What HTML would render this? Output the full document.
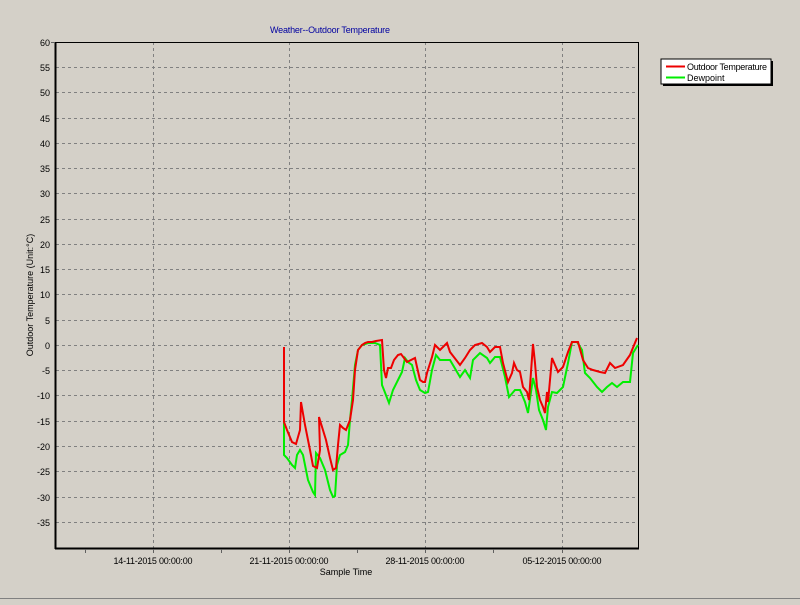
<!DOCTYPE html>
<html><head><meta charset="utf-8"><style>
html,body{margin:0;padding:0;background:#d4d0c8;}
body{width:800px;height:600px;overflow:hidden;font-family:"Liberation Sans",sans-serif;}
</style></head><body>
<svg width="800" height="600" xmlns="http://www.w3.org/2000/svg" font-family="Liberation Sans, sans-serif" font-size="9">
<rect x="0" y="0" width="800" height="600" fill="#d4d0c8"/>
<line x1="0" y1="598.5" x2="800" y2="598.5" stroke="#808080"/>
<text x="330" y="33" text-anchor="middle" fill="#0000a0" textLength="120">Weather--Outdoor Temperature</text>
<g stroke="#808080" stroke-dasharray="3,3" stroke-width="1">
<line x1="56" y1="67.5" x2="638" y2="67.5"/><line x1="56" y1="92.5" x2="638" y2="92.5"/><line x1="56" y1="118.5" x2="638" y2="118.5"/><line x1="56" y1="143.5" x2="638" y2="143.5"/><line x1="56" y1="168.5" x2="638" y2="168.5"/><line x1="56" y1="193.5" x2="638" y2="193.5"/><line x1="56" y1="219.5" x2="638" y2="219.5"/><line x1="56" y1="244.5" x2="638" y2="244.5"/><line x1="56" y1="269.5" x2="638" y2="269.5"/><line x1="56" y1="294.5" x2="638" y2="294.5"/><line x1="56" y1="320.5" x2="638" y2="320.5"/><line x1="56" y1="345.5" x2="638" y2="345.5"/><line x1="56" y1="370.5" x2="638" y2="370.5"/><line x1="56" y1="395.5" x2="638" y2="395.5"/><line x1="56" y1="421.5" x2="638" y2="421.5"/><line x1="56" y1="446.5" x2="638" y2="446.5"/><line x1="56" y1="471.5" x2="638" y2="471.5"/><line x1="56" y1="497.5" x2="638" y2="497.5"/><line x1="56" y1="522.5" x2="638" y2="522.5"/>
<line x1="153.5" y1="42" x2="153.5" y2="548"/><line x1="289.5" y1="42" x2="289.5" y2="548"/><line x1="425.5" y1="42" x2="425.5" y2="548"/><line x1="562.5" y1="42" x2="562.5" y2="548"/>
</g>
<g stroke="#000">
<line x1="55" y1="42.5" x2="638" y2="42.5"/><line x1="638.5" y1="42" x2="638.5" y2="548"/>
<line x1="55.5" y1="42" x2="55.5" y2="549" stroke-width="2"/><line x1="55" y1="548.5" x2="639" y2="548.5" stroke-width="2"/>
</g>
<g stroke="#606060"><line x1="85.5" y1="549" x2="85.5" y2="553"/><line x1="153.5" y1="549" x2="153.5" y2="553"/><line x1="221.5" y1="549" x2="221.5" y2="553"/><line x1="289.5" y1="549" x2="289.5" y2="553"/><line x1="357.5" y1="549" x2="357.5" y2="553"/><line x1="425.5" y1="549" x2="425.5" y2="553"/><line x1="493.5" y1="549" x2="493.5" y2="553"/><line x1="562.5" y1="549" x2="562.5" y2="553"/>
<line x1="51" y1="42.5" x2="55" y2="42.5"/></g>
<g text-anchor="end" fill="#000">
<text x="50" y="46">60</text><text x="50" y="71">55</text><text x="50" y="96">50</text><text x="50" y="122">45</text><text x="50" y="147">40</text><text x="50" y="172">35</text><text x="50" y="197">30</text><text x="50" y="223">25</text><text x="50" y="248">20</text><text x="50" y="273">15</text><text x="50" y="298">10</text><text x="50" y="324">5</text><text x="50" y="349">0</text><text x="50" y="374">-5</text><text x="50" y="399">-10</text><text x="50" y="425">-15</text><text x="50" y="450">-20</text><text x="50" y="475">-25</text><text x="50" y="501">-30</text><text x="50" y="526">-35</text>
</g>
<g text-anchor="middle" fill="#000">
<text x="153" y="564" textLength="79">14-11-2015 00:00:00</text><text x="289" y="564" textLength="79">21-11-2015 00:00:00</text><text x="425" y="564" textLength="79">28-11-2015 00:00:00</text><text x="562" y="564" textLength="79">05-12-2015 00:00:00</text>
<text x="346" y="575">Sample Time</text>
<text transform="translate(33,295) rotate(-90)">Outdoor Temperature (Unit:°C)</text>
</g>
<polyline fill="none" stroke="#00ee00" stroke-width="2" points="284,347 284,455 287,458 292,465 295,468 297,455 300,450 303,455 305,465 308,480 313,492 315,495 316,453 320,458 325,470 330,490 333,497 335,496 337,465 340,455 345,452 348,445 350,420 352,400 355,365 358,350 362,345 368,343 375,343 380,345 382,385 384,390 389,403 393,390 398,380 402,372 405,358 408,362 412,365 416,380 420,390 425,393 428,392 432,370 436,355 440,360 445,360 450,360 460,377 465,370 470,378 473,360 480,353 487,358 490,363 495,357 500,357 505,377 509,397 515,390 520,390 525,402 528,413 533,378 536,390 539,410 543,420 546,430 548,407 552,392 557,393 563,387 568,363 572,342 577,342 582,350 585,373 590,378 597,387 602,392 607,387 612,383 617,387 623,382 630,382 633,353 638,345"/>
<polyline fill="none" stroke="#ee0000" stroke-width="2" points="284,347 284,422 287,430 292,442 296,444 300,430 301,402 305,425 310,450 313,466 317,468 320,450 319,417 326,440 330,458 333,470 336,468 338,445 340,425 343,428 346,430 350,420 353,400 355,370 358,350 362,345 365,343 368,342 372,342 376,341 382,340 384,370 386,378 388,368 391,368 394,360 398,355 401,354 404,358 407,362 415,358 417,367 420,380 423,382 425,382 427,373 432,357 435,345 440,350 447,343 450,352 460,365 465,358 470,350 475,345 482,343 487,347 490,352 495,347 500,347 503,363 508,382 512,373 514,363 517,370 520,372 523,387 527,392 529,400 533,344 535,363 537,387 540,400 543,407 545,413 547,392 548,402 552,358 555,365 558,372 563,367 568,352 572,342 578,342 583,360 588,368 593,370 600,372 605,373 610,363 615,368 623,365 630,355 637,338"/>
<rect x="663" y="61" width="110" height="25" fill="#000"/>
<rect x="661" y="59" width="110" height="25" fill="#fff" stroke="#000"/>
<line x1="666" y1="66.5" x2="685" y2="66.5" stroke="#ee0000" stroke-width="2"/>
<line x1="666" y1="77.5" x2="685" y2="77.5" stroke="#00ee00" stroke-width="2"/>
<text x="687" y="70" fill="#000" textLength="80">Outdoor Temperature</text>
<text x="687" y="81" fill="#000">Dewpoint</text>
</svg>
</body></html>
